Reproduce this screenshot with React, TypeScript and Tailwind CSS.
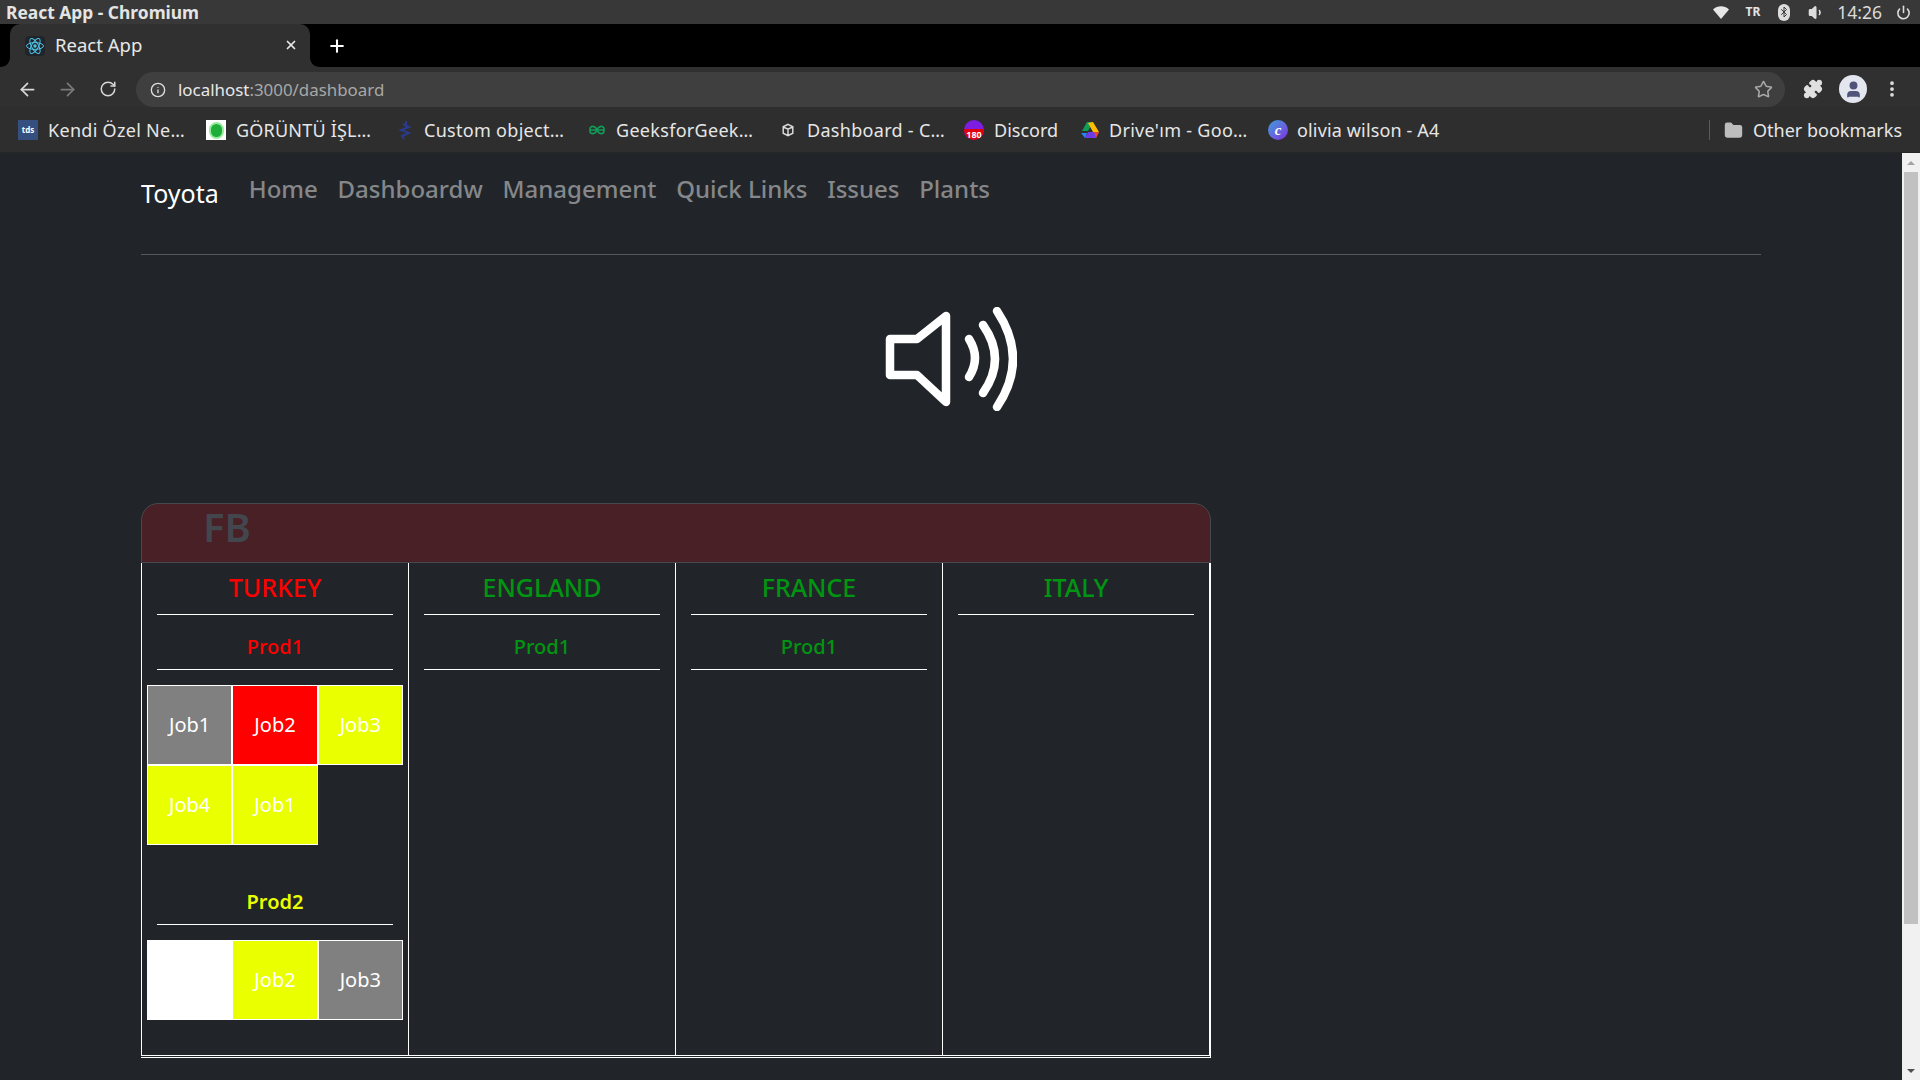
import { ArrowLeft, ArrowRight, RotateCw, Info, Star, Puzzle, Plus, X, Folder, MoreVertical, Bluetooth, Volume1, Power, User } from "lucide-react";

const Atom = () => (
  <svg width="20" height="20" viewBox="0 0 20 20" fill="none" stroke="#4fc3e8" strokeWidth="1" className="bg-[#20252b] rounded-sm">
    <ellipse cx="10" cy="10" rx="8.5" ry="3.4" />
    <ellipse cx="10" cy="10" rx="8.5" ry="3.4" transform="rotate(60 10 10)" />
    <ellipse cx="10" cy="10" rx="8.5" ry="3.4" transform="rotate(120 10 10)" />
    <circle cx="10" cy="10" r="1.7" fill="#4fc3e8" stroke="none" />
  </svg>
);

const Bookmarks = () => (
  <div className="h-[46px] pt-px bg-[#2e2e2e] border-b border-[#262626] flex items-center text-[18px] text-[#e6e6e6] shrink-0">
    <div className="ml-[18px] w-5 h-5 bg-[#35507f] text-[8px] font-bold text-white flex items-center justify-center">tds</div>
    <span className="ml-[10px] w-[138px] whitespace-nowrap tracking-[0.3px]">Kendi Özel Ne…</span>
    <div className="ml-[20px] w-5 h-5 bg-white flex items-center justify-center">
      <div className="w-[15px] h-[17px] rounded-full bg-[#1fae3a] border-2 border-[#9be89f]" />
    </div>
    <span className="ml-[10px] w-[139px] whitespace-nowrap tracking-[0.2px]">GÖRÜNTÜ İŞL…</span>
    <svg className="ml-[20px]" width="20" height="20" viewBox="0 0 20 20" fill="none" stroke="#2a3a8c" strokeWidth="2">
      <path d="M11 1v6M8 4l6 3-8 3 8 3-7 3 2 3" />
    </svg>
    <span className="ml-[9px] w-[143px] whitespace-nowrap tracking-[0.3px]">Custom object…</span>
    <svg className="ml-[20px]" width="20" height="20" viewBox="-2 -2 24 24" fill="none" stroke="#0f9d58" strokeWidth="2">
      <path d="M1 10h18M3 6c3-1 6 1 7 4-1 3-4 5-7 4-2-1-2-7 0-8zM17 6c-3-1-6 1-7 4 1 3 4 5 7 4 2-1 2-7 0-8z" />
    </svg>
    <span className="ml-[9px] w-[145px] whitespace-nowrap tracking-[0.3px]">GeeksforGeek…</span>
    <svg className="ml-[19px]" width="16" height="16" viewBox="-2 -2 20 20" fill="none" stroke="#ddd" strokeWidth="1.8">
      <path d="M8 1l6 3v8l-6 3-6-3V4zM2 4l6 3 6-3M8 7v8" />
    </svg>
    <span className="ml-[11px] w-[146px] whitespace-nowrap tracking-[0.3px]">Dashboard - C…</span>
    <div className="ml-[11px] w-5 h-5 rounded-full bg-[#7c1de0] relative overflow-hidden">
      <div className="absolute bottom-0 left-0 right-0 h-[11px] bg-[#e0000f] text-[9px] leading-[11px] font-bold text-white text-center">180</div>
    </div>
    <span className="ml-[10px] w-[76px] whitespace-nowrap">Discord</span>
    <svg className="ml-[10px]" width="20" height="20" viewBox="0 0 20 20">
      <path d="M7 2h6l-5 9H2z" fill="#0f9d58" />
      <path d="M13 2l6 10h-6L8 3z" fill="#fbbc04" />
      <path d="M5 18l3-6h11l-3 6z" fill="#6a3de8" />
      <path d="M1 13h6l-2 5z" fill="#2684fc" />
      <path d="M14 12h5l-3 6z" fill="#ea4335" />
    </svg>
    <span className="ml-[9px] w-[149px] whitespace-nowrap tracking-[0.3px]">Drive'ım - Goo…</span>
    <div className="ml-[10px] w-5 h-5 rounded-full bg-gradient-to-br from-[#1f9bd8] to-[#7a1fe0] text-white text-[15px] leading-[18px] italic font-['Liberation_Serif',serif] font-bold flex items-center justify-center">c</div>
    <span className="ml-[9px] w-[150px] whitespace-nowrap tracking-[0.15px]">olivia wilson - A4</span>
    <div className="ml-[262px] w-px h-5 bg-[#5a5a5a]" />
    <Folder size={19} fill="#bdbdbd" stroke="#bdbdbd" className="ml-[14px]" />
    <span className="ml-[10px] whitespace-nowrap">Other bookmarks</span>
  </div>
);

const Job = ({ label, bg }: { label?: string; bg: string }) => (
  <div className={`w-[85.33px] h-20 border border-white flex items-center justify-center text-[20px] text-white ${bg}`}>{label}</div>
);

const Column = ({ name, color, children }: { name: string; color: string; children?: React.ReactNode }) => (
  <div className="flex-1 border-l border-b border-white last:border-r">
    <div className={`h-[51px] pb-px flex items-center justify-center text-[25px] font-medium ${color}`}>{name}</div>
    <div className="mx-[15px] h-px bg-white" />
    {children}
  </div>
);

const Prod = ({ name, color, bold }: { name: string; color: string; bold?: boolean }) => (
  <>
    <div className={`h-[54px] pt-[10px] flex items-center justify-center text-[20px] ${color} ${bold ? "font-semibold" : "font-medium"}`}>{name}</div>
    <div className="mx-[15px] h-px bg-white" />
  </>
);

export default function App() {
  return (
    <div className="h-screen overflow-hidden flex flex-col bg-[#212529] font-['Noto_Sans',sans-serif]">
      {/* system bar */}
      <div className="h-6 bg-[#383838] flex items-center justify-between text-[#e4e4e4] shrink-0">
        <span className="ml-[6px] text-[17.4px] font-bold">React App - Chromium</span>
        <div className="flex items-center">
          <svg width="16" height="13" viewBox="0 0 16 13" fill="#e6e6e6">
            <path d="M0 3.5C4.5-.7 11.500-.7 16 3.500L8 13z" />
          </svg>
          <span className="ml-[16px] text-[12px] font-bold">TR</span>
          <div className="ml-[18px] w-[12px] h-[17px] bg-[#dddddd] rounded-md flex items-center justify-center">
            <Bluetooth size={12} className="text-[#383838]" />
          </div>
          <Volume1 size={17} fill="#ddd" className="ml-[18px] text-[#dddddd]" />
          <span className="ml-[12px] text-[17.500px] text-[#dcdcdc]">14:26</span>
          <Power size={15} strokeWidth={2.5} className="ml-[14px] mr-[9px] text-[#dddddd]" />
        </div>
      </div>

      {/* tab strip */}
      <div className="h-[43px] bg-black flex items-end shrink-0">
        <div className="relative ml-[10px] w-[300px] h-[43px] bg-[#303030] rounded-t-[10px] flex items-center text-[#e8e8e8]">
          <svg className="absolute -left-[10px] bottom-0" width="10" height="10" viewBox="0 0 10 10" fill="#303030">
            <path d="M10 0v10H0C6 10 10 6 10 0z" />
          </svg>
          <svg className="absolute -right-[10px] bottom-0" width="10" height="10" viewBox="0 0 10 10" fill="#303030">
            <path d="M0 0v10h10C4 10 0 6 0 0z" />
          </svg>
          <div className="ml-[15px]"><Atom /></div>
          <span className="ml-[10px] pb-[2px] text-[18.500px]">React App</span>
          <X size={14} strokeWidth={3} className="absolute left-[274px] top-[14px]" />
        </div>
        <Plus size={20} strokeWidth={2.5} className="ml-[17px] mb-[11px] text-white" />
      </div>

      {/* toolbar */}
      <div className="h-10 bg-[#303030] flex items-start shrink-0">
        <ArrowLeft size={21} className="ml-[17px] mt-[12px] text-[#d8d8d8]" />
        <ArrowRight size={21} className="ml-[19px] mt-[12px] text-[#7a7a7a]" />
        <RotateCw size={18} className="ml-[21px] mt-[13px] text-[#d8d8d8]" />
        <div className="ml-[19px] mt-[5px] w-[1649px] h-[35px] bg-[#3f3f3f] rounded-full flex items-center text-[16.900px]">
          <Info size={16} className="ml-[14px] text-[#e0e0e0]" />
          <span className="ml-[12px] text-[#e8e8e8]">localhost</span>
          <span className="text-[#a8a8a8]">:3000/dashboard</span>
          <Star size={19} className="ml-auto mr-[12px] text-[#a8a8a8]" />
        </div>
        <Puzzle size={20} fill="#e0e0e0" className="ml-[18px] mt-[12px] text-[#e0e0e0]" />
        <div className="ml-[16px] mt-[8px] w-7 h-7 rounded-full bg-[#e3e5ef] flex items-center justify-center">
          <User size={19} fill="#4f5478" className="text-[#4f5478]" />
        </div>
        <MoreVertical size={20} strokeWidth={2.5} className="ml-[15px] mt-[12px] text-[#e0e0e0]" />
      </div>

      <Bookmarks />

      {/* page */}
      <div className="flex-1 flex min-h-0">
        <div className="flex-1 px-[141px]">
          <nav className="h-[102px] border-b border-[#55585c] flex items-start">
            <span className="mt-[22px] text-[25px] text-white">Toyota</span>
            <ul className="ml-[30px] mt-[18px] flex gap-[19.750px] text-[24px] font-medium text-[#85878a]">
              <li>Home</li>
              <li>Dashboardw</li>
              <li>Management</li>
              <li>Quick Links</li>
              <li>Issues</li>
              <li>Plants</li>
            </ul>
          </nav>

          <div className="flex justify-center mt-[52px] mb-[92px]">
            <svg width="132" height="104" viewBox="885 307 132 104" fill="none" stroke="white" strokeWidth="8.5" strokeLinecap="round" strokeLinejoin="round">
              <path d="M890 339h27l29-23v86l-29-27h-27z" />
              <path d="M969 339q12 19 0 38" />
              <path d="M983 325q24 34 0 68" />
              <path d="M997 311q32 48 0 96" />
            </svg>
          </div>

          <div className="w-[1070px]">
            <div className="h-[60px] bg-[#482026] border border-[#45484d] rounded-t-[17px] pl-[61px] text-[40px] font-semibold text-[#43464c] leading-[46px]">FB</div>
            <div className="h-[495px] pb-px border-b border-r border-white flex">
              <Column name="TURKEY" color="text-[#ff0000]">
                <Prod name="Prod1" color="text-[#ff0000]" />
                <div className="ml-[5px] mt-[15px] flex flex-wrap w-[256px]">
                  <Job label="Job1" bg="bg-[#808080]" />
                  <Job label="Job2" bg="bg-[#ff0000]" />
                  <Job label="Job3" bg="bg-[#eaff00]" />
                  <Job label="Job4" bg="bg-[#eaff00]" />
                  <Job label="Job1" bg="bg-[#eaff00]" />
                </div>
                <div className="mt-[25px]">
                  <Prod name="Prod2" color="text-[#eaff00]" bold />
                </div>
                <div className="ml-[5px] mt-[15px] flex w-[256px]">
                  <Job bg="bg-white" />
                  <Job label="Job2" bg="bg-[#eaff00]" />
                  <Job label="Job3" bg="bg-[#808080]" />
                </div>
              </Column>
              <Column name="ENGLAND" color="text-[#009612]">
                <Prod name="Prod1" color="text-[#009612]" />
              </Column>
              <Column name="FRANCE" color="text-[#009612]">
                <Prod name="Prod1" color="text-[#009612]" />
              </Column>
              <Column name="ITALY" color="text-[#009612]" />
            </div>
          </div>
        </div>

        {/* scrollbar */}
        <div className="w-[18px] bg-[#f1f1f1] flex flex-col items-center">
          <div className="h-[19px] flex items-center justify-center">
            <div className="w-0 h-0 border-x-[4px] border-x-transparent border-b-[4px] border-b-[#a3a3a3]" />
          </div>
          <div className="w-[14px] h-[752px] bg-[#c1c1c1]" />
          <div className="mt-auto h-[19px] flex items-center justify-center">
            <div className="w-0 h-0 border-x-[4px] border-x-transparent border-t-[4px] border-t-[#505050]" />
          </div>
        </div>
      </div>
    </div>
  );
}
